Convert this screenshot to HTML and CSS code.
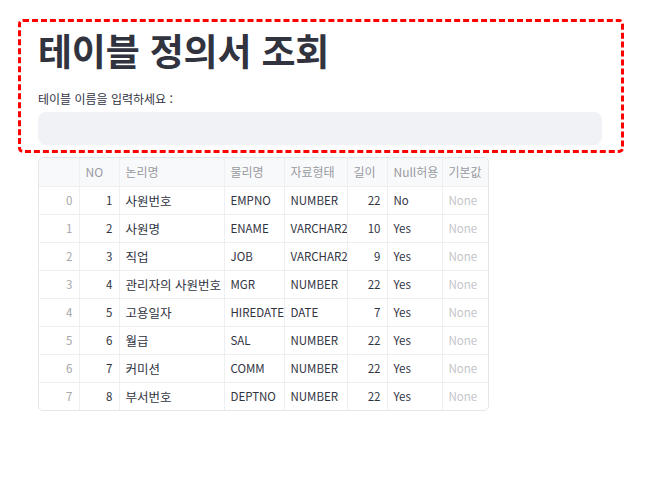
FILE: index.html
```html
<!DOCTYPE html>
<html lang="ko">
<head>
<meta charset="utf-8">
<link rel="stylesheet" href="styles.css">
</head>
<body>
<div class="page">
  <section class="frame">
    <h1 class="title">테이블 정의서 조회</h1>
    <label class="label" for="tbl">테이블 이름을 입력하세요 :</label>
    <input class="input" id="tbl" type="text">
  </section>
  <div class="grid-wrap">
    <table class="grid">
      <colgroup>
        <col style="width:40px"><col style="width:40px"><col style="width:105px"><col style="width:60px"><col style="width:63px"><col style="width:40px"><col style="width:55px"><col style="width:46px">
      </colgroup>
      <thead>
        <tr><th></th><th>NO</th><th>논리명</th><th>물리명</th><th>자료형태</th><th>길이</th><th>Null허용</th><th>기본값</th></tr>
      </thead>
      <tbody>
        <tr><td class="idx">0</td><td class="r">1</td><td class="ko">사원번호</td><td>EMPNO</td><td>NUMBER</td><td class="r">22</td><td>No</td><td class="none">None</td></tr>
        <tr><td class="idx">1</td><td class="r">2</td><td class="ko">사원명</td><td>ENAME</td><td>VARCHAR2</td><td class="r">10</td><td>Yes</td><td class="none">None</td></tr>
        <tr><td class="idx">2</td><td class="r">3</td><td class="ko">직업</td><td>JOB</td><td>VARCHAR2</td><td class="r">9</td><td>Yes</td><td class="none">None</td></tr>
        <tr><td class="idx">3</td><td class="r">4</td><td class="ko">관리자의 사원번호</td><td>MGR</td><td>NUMBER</td><td class="r">22</td><td>Yes</td><td class="none">None</td></tr>
        <tr><td class="idx">4</td><td class="r">5</td><td class="ko">고용일자</td><td>HIREDATE</td><td>DATE</td><td class="r">7</td><td>Yes</td><td class="none">None</td></tr>
        <tr><td class="idx">5</td><td class="r">6</td><td class="ko">월급</td><td>SAL</td><td>NUMBER</td><td class="r">22</td><td>Yes</td><td class="none">None</td></tr>
        <tr><td class="idx">6</td><td class="r">7</td><td class="ko">커미션</td><td>COMM</td><td>NUMBER</td><td class="r">22</td><td>Yes</td><td class="none">None</td></tr>
        <tr><td class="idx">7</td><td class="r">8</td><td class="ko">부서번호</td><td>DEPTNO</td><td>NUMBER</td><td class="r">22</td><td>Yes</td><td class="none">None</td></tr>
      </tbody>
    </table>
  </div>
</div>
</body>
</html>
```
FILE: styles.css
```css
* { box-sizing: border-box; }
html, body { margin: 0; background: #ffffff; }
body {
  font-family: "Noto Sans CJK KR", "Noto Sans", sans-serif;
  color: #31333f;
}
.page {
  padding: 19px 0 0 18px;
}
.frame {
  width: 606px;
  border: 3px dashed #ff0000;
  border-radius: 5px;
  padding: 5px 19px 5px 17px;
  display: flex;
  flex-direction: column;
}
.title {
  margin: 0;
  font-size: 37px;
  font-weight: 700;
  line-height: 46px;
  letter-spacing: -0.005em;
  color: #31333f;
}
.label {
  margin-top: 18px;
  font-size: 12px;
  line-height: 16px;
  color: #31333f;
}
.input {
  margin-top: 5px;
  height: 33px;
  width: 100%;
  border: none;
  border-radius: 8px;
  background: #f0f2f6;
  outline: none;
}
.grid-wrap {
  margin: 4px 0 0 20px;
  width: 451px;
  border: 1px solid #e6e7ea;
  border-radius: 5px;
  overflow: hidden;
}
.grid {
  border-collapse: collapse;
  table-layout: fixed;
  width: 449px;
  font-size: 11.5px;
}
.grid th, .grid td {
  height: 28px;
  padding: 0 6px;
  border-right: 1px solid #eeeff1;
  border-bottom: 1px solid #eeeff1;
  white-space: nowrap;
  overflow: hidden;
  text-align: left;
  vertical-align: middle;
}
.grid th:last-child, .grid td:last-child { border-right: none; }
.grid tbody tr:last-child td { border-bottom: none; }
.grid th {
  background: #f8f9fb;
  font-weight: 400;
  color: #999aa0;
  font-size: 12px;
}
.grid .r { text-align: right; }
.grid .idx { text-align: right; color: #a5a6ab; }
.grid .ko { font-size: 12.5px; }
.grid .none { color: #c3c4c8; }
```
